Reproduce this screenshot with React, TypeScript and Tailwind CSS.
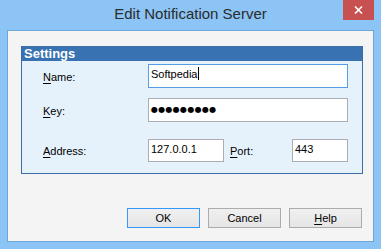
import React from 'react'

const ui = { fontFamily: '"Liberation Sans", Arial, sans-serif' }

function Label({ k, rest }: { k: string; rest: string }) {
  return (
    <span className="text-[11px] text-black">
      <span className="underline underline-offset-[2px]">{k}</span>
      {rest}
    </span>
  )
}

function Field({ children, focused, w }: { children?: React.ReactNode; focused?: boolean; w: string }) {
  return (
    <div
      className={`${w} h-[24px] bg-white border ${focused ? 'border-[#569de5]' : 'border-[#abadb3]'} flex items-start pt-[2px] px-[2px] text-[11px] leading-[14px] text-black`}
    >
      {children}
    </div>
  )
}

function Button({ children, primary }: { children: React.ReactNode; primary?: boolean }) {
  return (
    <button
      className={`h-[20px] w-[73px] border ${primary ? 'border-[#3399ff]' : 'border-[#acacac]'} bg-gradient-to-b from-[#f0f0f0] to-[#e5e5e5] text-[11px] text-black flex items-center justify-center`}
    >
      {children}
    </button>
  )
}

export default function App() {
  return (
    <div className="w-[381px] h-[249px] bg-[#8cc5f5] flex flex-col select-none" style={ui}>
      {/* title bar */}
      <div className="relative h-[30px] flex items-center justify-center">
        <span className="text-[15px] text-[#2b2b2b] pb-[1px]">Edit Notification Server</span>
        <div className="absolute right-[7px] top-0 w-[31px] h-[20px] bg-[#c75050] flex items-center justify-center">
          <svg width="9" height="8" viewBox="0 0 9 8">
            <path d="M1 0.5 L8 7.5 M8 0.5 L1 7.5" stroke="white" strokeWidth="1.6" />
          </svg>
        </div>
      </div>

      {/* client */}
      <div className="ml-[7px] w-[367px] h-[212px] border border-[#6fa6d9] bg-[#f4f4f4] flex flex-col">
        <div className="ml-[13px] mt-[15px] w-[342px] h-[128px] border border-[#3a6ea5] bg-[#e6f2fb] flex flex-col">
          <div className="h-[14px] bg-[#3872b2] flex items-center pl-[2px]">
            <span className="text-[13px] font-bold text-white leading-[14px]">Settings</span>
          </div>

          <div className="flex items-center mt-[3px] pl-[21px]">
            <div className="w-[105px]"><Label k="N" rest="ame:" /></div>
            <Field w="w-[200px]" focused>
              <span>Softpedia</span>
              <span className="w-[1px] h-[13px] bg-black ml-[1px]" />
            </Field>
          </div>

          <div className="flex items-center mt-[10px] pl-[21px]">
            <div className="w-[105px]"><Label k="K" rest="ey:" /></div>
            <Field w="w-[200px]">
              <span className="text-[8px] leading-[17px] tracking-[0.3px]" style={{ fontFamily: '"DejaVu Sans", sans-serif' }}>
                ●●●●●●●●●
              </span>
            </Field>
          </div>

          <div className="flex items-center mt-[16px] pl-[21px]">
            <div className="w-[105px]"><Label k="A" rest="ddress:" /></div>
            <Field w="w-[76px] !h-[23px]">127.0.0.1</Field>
            <div className="ml-[6px] w-[62px]"><Label k="P" rest="ort:" /></div>
            <Field w="w-[56px] !h-[23px]">443</Field>
          </div>
        </div>

        <div className="flex justify-end gap-[8px] mt-[34px] pr-[11px]">
          <Button primary>OK</Button>
          <Button>Cancel</Button>
          <Button>
            <span className="underline underline-offset-[2px]">H</span>elp
          </Button>
        </div>
      </div>
    </div>
  )
}
